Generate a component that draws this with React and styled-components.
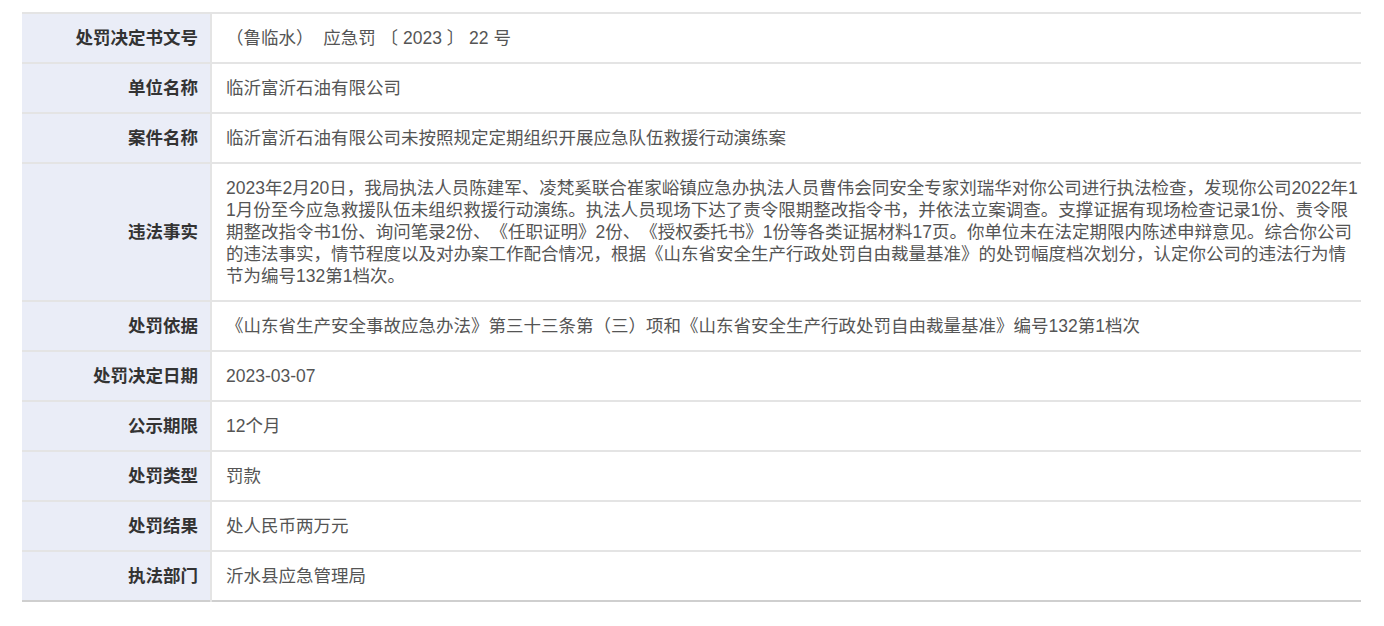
import React from "react";
import styled, { createGlobalStyle } from "styled-components";

const GlobalStyle = createGlobalStyle`
  body {
    margin: 0;
    background: #fff;
    font-family: "Liberation Sans", "Noto Sans CJK SC", sans-serif;
  }
`;

const Page = styled.div`
  padding: 12px 23px 0 22px;
`;

const Table = styled.table`
  width: 100%;
  border-collapse: collapse;
  table-layout: fixed;
  border-top: 2px solid #e4e4e4;
  border-bottom: 2px solid #cfcfcf;
  text-spacing-trim: space-all;
`;

const Row = styled.tr`
  border-bottom: 2px solid #e4e4e4;
  &:last-child {
    border-bottom: none;
  }
`;

const Label = styled.th`
  width: 176px;
  background: #eaedf7;
  color: #333;
  font-size: 17.5px;
  font-weight: bold;
  text-align: right;
  padding: 13px 12px 13px 0;
  line-height: 22px;
  border-right: 2px solid #e4e4e4;
  vertical-align: middle;
  white-space: nowrap;
`;

const Value = styled.td`
  color: #555;
  font-size: 17.5px;
  line-height: 22px;
  padding: 13px 0 13px 14px;
  text-align: left;
  vertical-align: middle;
  word-break: break-all;
`;

const rows = [
  ["处罚决定书文号", "（鲁临水）\u00a0 应急罚 〔 2023 〕 22 号"],
  ["单位名称", "临沂富沂石油有限公司"],
  ["案件名称", "临沂富沂石油有限公司未按照规定定期组织开展应急队伍救援行动演练案"],
  [
    "违法事实",
    "2023年2月20日，我局执法人员陈建军、凌梵奚联合崔家峪镇应急办执法人员曹伟会同安全专家刘瑞华对你公司进行执法检查，发现你公司2022年11月份至今应急救援队伍未组织救援行动演练。执法人员现场下达了责令限期整改指令书，并依法立案调查。支撑证据有现场检查记录1份、责令限期整改指令书1份、询问笔录2份、《任职证明》2份、《授权委托书》1份等各类证据材料17页。你单位未在法定期限内陈述申辩意见。综合你公司的违法事实，情节程度以及对办案工作配合情况，根据《山东省安全生产行政处罚自由裁量基准》的处罚幅度档次划分，认定你公司的违法行为情节为编号132第1档次。",
  ],
  ["处罚依据", "《山东省生产安全事故应急办法》第三十三条第（三）项和《山东省安全生产行政处罚自由裁量基准》编号132第1档次"],
  ["处罚决定日期", "2023-03-07"],
  ["公示期限", "12个月"],
  ["处罚类型", "罚款"],
  ["处罚结果", "处人民币两万元"],
  ["执法部门", "沂水县应急管理局"],
];

export default function App() {
  return (
    <>
      <GlobalStyle />
      <Page>
        <Table>
          <tbody>
            {rows.map(([label, value]) => (
              <Row key={label}>
                <Label>{label}</Label>
                <Value>{value}</Value>
              </Row>
            ))}
          </tbody>
        </Table>
      </Page>
    </>
  );
}
